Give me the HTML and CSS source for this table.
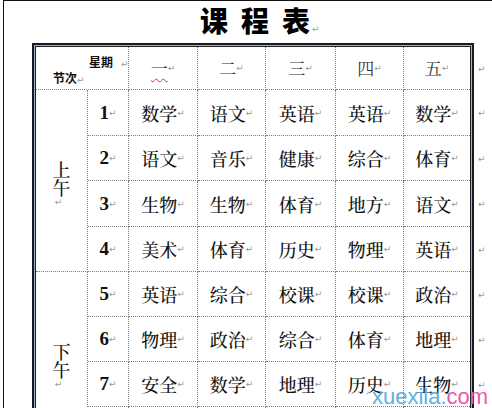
FILE: index.html
```html
<!DOCTYPE html>
<html lang="zh">
<head>
<meta charset="utf-8">
<title>课程表</title>
<link rel="stylesheet" href="styles.css">
</head>
<body>
<div class="page">
  <span class="tick"></span>
  <h1 class="title"><span class="tt">课程</span>表<span class="m">↵</span></h1>
  <div class="sheet">
    <div class="frame">
      <div class="grid">
        <div class="c corner">
          <div class="wk">星期<span class="m gap">↵</span></div>
          <div class="jc">节次<span class="m">↵</span></div>
        </div>
        <div class="c day"><span class="typo">一</span><span class="m">↵</span></div>
        <div class="c day">二<span class="m">↵</span></div>
        <div class="c day">三<span class="m">↵</span></div>
        <div class="c day">四<span class="m">↵</span></div>
        <div class="c day last">五<span class="m">↵</span></div>

        <div class="c half am"><span>上</span><span>午</span><span class="m">↵</span></div>
        <div class="c no">1<span class="m">↵</span></div>
        <div class="c">数学<span class="m">↵</span></div>
        <div class="c">语文<span class="m">↵</span></div>
        <div class="c">英语<span class="m">↵</span></div>
        <div class="c">英语<span class="m">↵</span></div>
        <div class="c last">数学<span class="m">↵</span></div>

        <div class="c no">2<span class="m">↵</span></div>
        <div class="c">语文<span class="m">↵</span></div>
        <div class="c">音乐<span class="m">↵</span></div>
        <div class="c">健康<span class="m">↵</span></div>
        <div class="c">综合<span class="m">↵</span></div>
        <div class="c last">体育<span class="m">↵</span></div>

        <div class="c no">3<span class="m">↵</span></div>
        <div class="c">生物<span class="m">↵</span></div>
        <div class="c">生物<span class="m">↵</span></div>
        <div class="c">体育<span class="m">↵</span></div>
        <div class="c">地方<span class="m">↵</span></div>
        <div class="c last">语文<span class="m">↵</span></div>

        <div class="c no">4<span class="m">↵</span></div>
        <div class="c">美术<span class="m">↵</span></div>
        <div class="c">体育<span class="m">↵</span></div>
        <div class="c">历史<span class="m">↵</span></div>
        <div class="c">物理<span class="m">↵</span></div>
        <div class="c last">英语<span class="m">↵</span></div>

        <div class="c half pm"><span>下</span><span>午</span><span class="m">↵</span></div>
        <div class="c no">5<span class="m">↵</span></div>
        <div class="c">英语<span class="m">↵</span></div>
        <div class="c">综合<span class="m">↵</span></div>
        <div class="c">校课<span class="m">↵</span></div>
        <div class="c">校课<span class="m">↵</span></div>
        <div class="c last">政治<span class="m">↵</span></div>

        <div class="c no">6<span class="m">↵</span></div>
        <div class="c">物理<span class="m">↵</span></div>
        <div class="c">政治<span class="m">↵</span></div>
        <div class="c">综合<span class="m">↵</span></div>
        <div class="c">体育<span class="m">↵</span></div>
        <div class="c last">地理<span class="m">↵</span></div>

        <div class="c no">7<span class="m">↵</span></div>
        <div class="c">安全<span class="m">↵</span></div>
        <div class="c">数学<span class="m">↵</span></div>
        <div class="c">地理<span class="m">↵</span></div>
        <div class="c">历史<span class="m">↵</span></div>
        <div class="c last">生物<span class="m">↵</span></div>

        <div class="c no"></div>
        <div class="c"></div>
        <div class="c"></div>
        <div class="c"></div>
        <div class="c"></div>
        <div class="c last"></div>
      </div>
    </div>
    <div class="ends">
      <span class="m">↵</span><span class="m">↵</span><span class="m">↵</span><span class="m">↵</span><span class="m">↵</span><span class="m">↵</span><span class="m">↵</span><span class="m">↵</span>
    </div>
  </div>
  <div class="wm"><span class="wm-a">xuexila.</span><span class="wm-b">com</span></div>
</div>
</body>
</html>
```

FILE: styles.css
```css
html, body {
  margin: 0;
  padding: 0;
  background: #fff;
  overflow: hidden;
}

body {
  width: 492px;
  height: 408px;
  font-family: "Noto Serif CJK SC", "Noto Sans CJK SC", serif;
  color: #111;
}

.page {
  position: relative;
  margin-left: 3px;
  height: 407px;
  border-left: 1px solid #111;
  border-top: 1px solid #111;
  overflow: hidden;
}

.tick {
  position: absolute;
  left: -4px;
  top: 228px;
  width: 3px;
  height: 5px;
  border: 1px solid #111;
  border-left: none;
}

.title {
  margin: 0;
  height: 42px;
  padding-left: 196px;
  font-family: "Noto Sans CJK SC", sans-serif;
  font-weight: 900;
  font-size: 28px;
  line-height: 38px;
  color: #000;
}

.title .tt {
  letter-spacing: 13px;
}

.title .m {
  margin-left: 2px;
}

.m {
  font-family: "DejaVu Sans", sans-serif;
  font-size: 9px;
  font-weight: 400;
  color: #9a9a9a;
  letter-spacing: 0;
}

.sheet {
  display: flex;
  align-items: flex-start;
  margin-left: 28px;
}

.frame {
  border: 2px solid #151a26;
  padding: 1px;
  background: #a7b1be;
}

.grid {
  display: grid;
  grid-template-columns: 52px 41px 69px 68px 70px 68px 66px;
  grid-template-rows: 43px 46px 45px 46px 45px 45px 45px 45px 46px;
  border: 1px solid #222;
  background: #fff;
}

.c {
  box-sizing: border-box;
  display: flex;
  align-items: center;
  justify-content: center;
  border-right: 1px dotted #7d7d7d;
  border-bottom: 1px dotted #7d7d7d;
  font-size: 18px;
  line-height: 20px;
  font-weight: 500;
  white-space: nowrap;
}

.c.last {
  border-right: none;
}

.corner {
  grid-column: span 2;
  flex-direction: column;
  align-items: stretch;
  justify-content: flex-start;
  padding-top: 8px;
  font-family: "Noto Sans CJK SC", sans-serif;
  font-weight: 700;
  font-size: 12px;
  line-height: 14px;
}

.wk {
  padding-left: 53px;
}

.wk .gap {
  margin-left: 8px;
}

.jc {
  padding-left: 17px;
}

.day {
  font-size: 17px;
  color: #333;
  font-weight: 400;
}

.typo {
  text-decoration: underline wavy #d23a3a;
  text-decoration-thickness: 1px;
  text-underline-offset: 3px;
}

.no {
  font-family: "Liberation Serif", serif;
  font-weight: 700;
  font-size: 19px;
}

.half {
  grid-row: span 4;
  flex-direction: column;
  padding-top: 6px;
  font-size: 18px;
  line-height: 18px;
  font-weight: 500;
}

.half .m {
  line-height: 9px;
  margin-top: 2px;
  margin-right: 6px;
}

.ends {
  display: grid;
  grid-template-rows: 43px 46px 45px 46px 45px 45px 45px 45px;
  padding-top: 4px;
  padding-left: 4px;
}

.ends .m {
  display: flex;
  align-items: center;
}

.wm {
  position: absolute;
  left: 368px;
  top: 385px;
  font-family: "Liberation Sans", Arial, sans-serif;
  font-size: 22px;
  line-height: 22px;
  white-space: nowrap;
}

.wm-a {
  color: #5eb0df;
}

.wm-b {
  color: #ec5aa6;
}
```
